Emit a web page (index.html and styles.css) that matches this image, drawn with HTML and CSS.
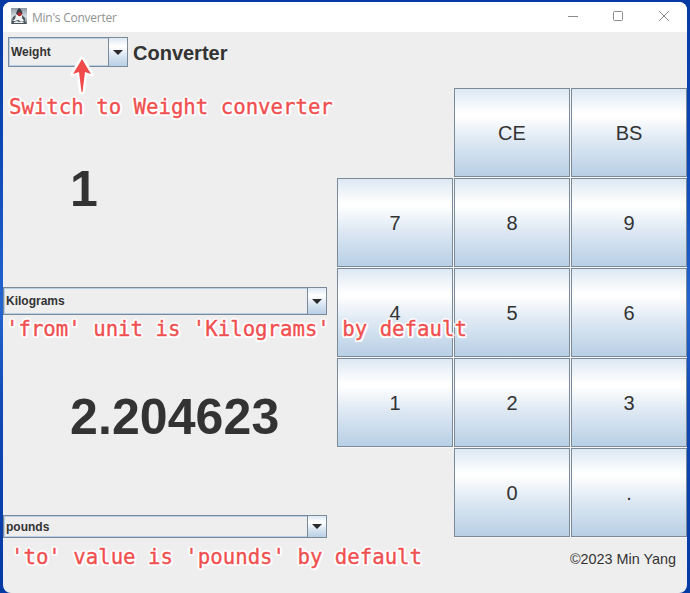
FILE: index.html
```html
<!DOCTYPE html>
<html lang="en">
<head>
<meta charset="utf-8">
<title>Min's Converter</title>
<link rel="stylesheet" href="styles.css">
</head>
<body>
<main class="window">
  <header class="titlebar">
    <svg class="app-icon" width="16" height="16" viewBox="0 0 16 16">
      <defs><linearGradient id="ic" x1="0" y1="0" x2="0" y2="1"><stop offset="0" stop-color="#8e99a5"/><stop offset=".55" stop-color="#d5dce1"/><stop offset="1" stop-color="#69737d"/></linearGradient></defs>
      <rect width="16" height="16" fill="url(#ic)"/>
      <path d="M8 1C5 4 4 8 2 14l4-2 3 1 4 2c0-5-1-10-5-14z" fill="#f0f2f3"/>
      <path d="M8 0C6 2 5.500 4 5 6l3 2 3.500-2C11 3 10 1 8 0z" fill="#393d44"/>
      <path d="M2 9l3-2-1 4-3 2zM11 7l3 3v4l-3-4zM1 13h4l2-1 2 1h3l3 1v2H1z" fill="#4b535c"/>
      <path d="M3 14l3-1 2 1 3-1 2 2H3z" fill="#e8ecee"/>
      <circle cx="8.600" cy="6.300" r="2" fill="#b52b34"/>
    </svg>
    <span class="title">Min's Converter</span>
    <svg class="controls" width="102" height="12" viewBox="0 0 102 12" fill="none" stroke="#8b8b8b">
      <path d="M0 5.500h10"/>
      <rect x="45.500" y=".5" width="9" height="9" rx="1"/>
      <path d="M91 0l10 10M101 0L91 10"/>
    </svg>
  </header>
  <div class="toolbar">
    <div class="combo kind"><span class="value">Weight</span><span class="arrow"><svg width="10" height="5"><path d="M0 0h10L5 5z"/></svg></span></div>
    <h1>Converter</h1>
  </div>
  <div class="content">
    <section class="units">
      <div class="number">1</div>
      <div class="combo from"><span class="value">Kilograms</span><span class="arrow"><svg width="10" height="5"><path d="M0 0h10L5 5z"/></svg></span></div>
      <div class="number">2.204623</div>
      <div class="combo to"><span class="value">pounds</span><span class="arrow"><svg width="10" height="5"><path d="M0 0h10L5 5z"/></svg></span></div>
    </section>
    <section class="side">
      <div class="keypad">
        <button class="ce">CE</button><button>BS</button>
        <button>7</button><button>8</button><button>9</button>
        <button>4</button><button>5</button><button>6</button>
        <button>1</button><button>2</button><button>3</button>
        <button class="zero">0</button><button>.</button>
      </div>
      <footer>©2023 Min Yang</footer>
    </section>
  </div>
</main>
<svg class="pointer" width="26" height="44" viewBox="0 0 26 44"><path d="M13 5L22 20L16 18L13.500 38H12.500L10 18L4 20Z" stroke="#fff" stroke-width="5" stroke-linejoin="round" fill="#fff"/><path d="M13 5L22 20L16 18L13.500 38H12.500L10 18L4 20Z" fill="#f04b4b"/></svg>
<p class="note note-kind">Switch to Weight converter</p>
<p class="note note-from">'from' unit is 'Kilograms' by default</p>
<p class="note note-to">'to' value is 'pounds' by default</p>
</body>
</html>
```

FILE: styles.css
```css
* { box-sizing: border-box; }
body {
  margin: 0;
  height: 593px;
  padding: 2px 3px 0;
  overflow: hidden;
  position: relative;
  background: linear-gradient(180deg, #0539a4 0, #0d47b5 25%, #2465d0 52%, #1249b5 68%, #0539a4 100%);
  font-family: "Liberation Sans", Arial, sans-serif;
  color: #333;
}
.window {
  height: 591px;
  background: #eee;
  border-radius: 8px;
  overflow: hidden;
}
.titlebar {
  height: 30px;
  padding: 0 17px 0 8px;
  display: flex;
  align-items: center;
  background: #fff;
}
.app-icon { margin-top: -2px; }
.title {
  margin-left: 5px;
  font: 12px "Open Sans", sans-serif;
  letter-spacing: -.25px;
  color: #929292;
}
.controls { margin-left: auto; }
.toolbar {
  height: 56px;
  padding: 5px 5px 0;
  display: flex;
  align-items: flex-start;
  gap: 5px;
}
h1 { margin: 0; font-size: 20px; line-height: 32px; }
.combo {
  display: flex;
  border: 1px solid #7a8a99;
  box-shadow: inset 0 0 0 1px #b8cfe5;
  font-size: 12px;
  font-weight: bold;
}
.value { flex: 1; padding-left: 2px; align-self: center; }
.arrow {
  width: 19px;
  display: flex;
  align-items: center;
  justify-content: center;
  border-left: 1px solid #7a8a99;
}
.arrow, .keypad button {
  background: linear-gradient(#dde8f3 0, #fff 28%, #fff 31%, #dde8f3 60%, #b8cfe5 100%);
}
.arrow svg { fill: #2b2b2b; }
.kind { width: 120px; height: 30px; }
.content { display: flex; justify-content: space-between; height: 505px; }
.units {
  width: 324px;
  display: grid;
  grid-template-rows: 199px 28px 200px 23px;
}
.number {
  padding: 3px 0 0 67px;
  display: flex;
  align-items: center;
  font-size: 50px;
  font-weight: bold;
  letter-spacing: .1px;
}
.side { width: 350px; }
.keypad {
  display: grid;
  grid-template-columns: repeat(3, 116px);
  grid-auto-rows: 89px;
  gap: 1px;
}
.keypad button {
  padding: 2px 0 0;
  border: 1px solid #7a8a99;
  border-radius: 0;
  font: 20px "Liberation Sans", Arial, sans-serif;
  color: #333;
  box-shadow: 1px 1px #f8f8f8;
}
.ce, .zero { grid-column: 2; }
footer {
  padding: 14px 11px 0 0;
  text-align: right;
  font-size: 14.400px;
  line-height: 16px;
}
.pointer { position: absolute; left: 69px; top: 54px; }
.note {
  position: absolute;
  margin: 0;
  font: 20.700px/24px "DejaVu Sans Mono", monospace;
  white-space: pre;
  color: #f04f4f;
  -webkit-text-stroke: .35px #f04f4f;
  text-shadow: 2px 0 #fff, -2px 0 #fff, 0 2px #fff, 0 -2px #fff,
    1.500px 1.500px #fff, -1.500px 1.500px #fff, 1.500px -1.500px #fff, -1.500px -1.500px #fff, 0 0 4px #fff;
}
.note-kind { left: 9px; top: 95px; }
.note-from { left: 6px; top: 317px; }
.note-to { left: 11px; top: 545px; }
```
